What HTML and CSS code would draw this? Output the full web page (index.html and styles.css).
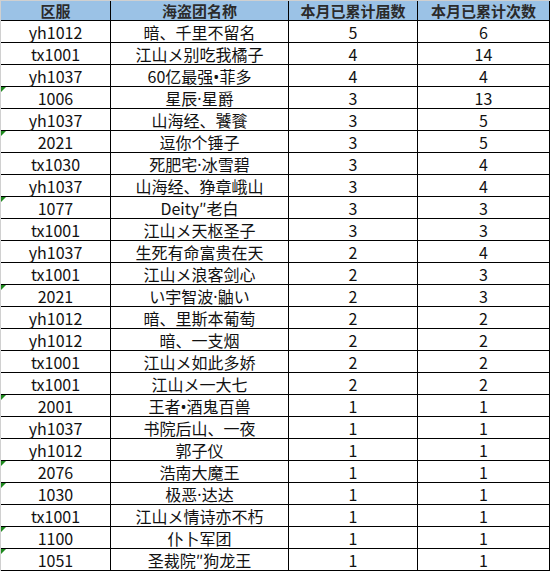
FILE: index.html
```html
<!DOCTYPE html>
<html lang="zh-CN">
<head>
<meta charset="utf-8">
<title>海盗团统计</title>
<link rel="stylesheet" href="styles.css">
</head>
<body>
<div class="sheet">
<table class="grid">
<colgroup><col class="c1"><col class="c2"><col class="c3"><col class="c4"></colgroup>
<thead>
<tr><th>区服</th><th>海盗团名称</th><th>本月已累计届数</th><th>本月已累计次数</th></tr>
</thead>
<tbody>
<tr><td>yh1012</td><td>暗、千里不留名</td><td>5</td><td>6</td></tr>
<tr><td>tx1001</td><td>江山メ别吃我橘子</td><td>4</td><td>14</td></tr>
<tr><td>yh1037</td><td>60亿最强<span class="dot">•</span>菲多</td><td>4</td><td>4</td></tr>
<tr><td class="flag">1006</td><td>星辰<span class="dot">·</span>星爵</td><td>3</td><td>13</td></tr>
<tr><td>yh1037</td><td>山海经、饕餮</td><td>3</td><td>5</td></tr>
<tr><td class="flag">2021</td><td>逗你个锤子</td><td>3</td><td>5</td></tr>
<tr><td>tx1030</td><td>死肥宅<span class="dot">·</span>冰雪碧</td><td>3</td><td>4</td></tr>
<tr><td>yh1037</td><td>山海经、狰章峨山</td><td>3</td><td>4</td></tr>
<tr><td class="flag">1077</td><td>Deity″老白</td><td>3</td><td>3</td></tr>
<tr><td>tx1001</td><td>江山メ天枢圣子</td><td>3</td><td>3</td></tr>
<tr><td>yh1037</td><td>生死有命富贵在天</td><td>2</td><td>4</td></tr>
<tr><td>tx1001</td><td>江山メ浪客剑心</td><td>2</td><td>3</td></tr>
<tr><td class="flag">2021</td><td>い宇智波<span class="dot">·</span>鼬い</td><td>2</td><td>3</td></tr>
<tr><td>yh1012</td><td>暗、里斯本葡萄</td><td>2</td><td>2</td></tr>
<tr><td>yh1012</td><td>暗、一支烟</td><td>2</td><td>2</td></tr>
<tr><td>tx1001</td><td>江山メ如此多娇</td><td>2</td><td>2</td></tr>
<tr><td>tx1001</td><td>江山メ一大七</td><td>2</td><td>2</td></tr>
<tr><td class="flag">2001</td><td>王者<span class="dot">•</span>酒鬼百兽</td><td>1</td><td>1</td></tr>
<tr><td>yh1037</td><td>书院后山、一夜</td><td>1</td><td>1</td></tr>
<tr><td>yh1012</td><td>郭子仪</td><td>1</td><td>1</td></tr>
<tr><td class="flag">2076</td><td>浩南大魔王</td><td>1</td><td>1</td></tr>
<tr><td class="flag">1030</td><td>极恶<span class="dot">·</span>达达</td><td>1</td><td>1</td></tr>
<tr><td>tx1001</td><td>江山メ情诗亦不朽</td><td>1</td><td>1</td></tr>
<tr><td class="flag">1100</td><td>仆卜军团</td><td>1</td><td>1</td></tr>
<tr><td class="flag">1051</td><td>圣裁院″狗龙王</td><td>1</td><td>1</td></tr>
</tbody>
</table>
</div>
</body>
</html>
```

FILE: styles.css
```css
html, body {
  margin: 0;
  padding: 0;
  background: #ffffff;
}

.sheet {
  width: 549px;
  border-top: 1px solid #d0d0d0;
  border-left: 1px solid #d0d0d0;
}

.grid {
  width: 549px;
  table-layout: fixed;
  border-collapse: separate;
  border-spacing: 0;
  font-family: "Noto Sans CJK SC", "Noto Sans", sans-serif;
  color: #111111;
}

.c1 { width: 110px; }
.c2 { width: 178px; }
.c3 { width: 129px; }
.c4 { width: 132px; }

.grid th,
.grid td {
  padding: 0;
  text-align: center;
  vertical-align: middle;
  border-right: 1px solid #000000;
  border-bottom: 1px solid #000000;
  white-space: nowrap;
  box-sizing: border-box;
}

.grid thead tr {
  height: 20px;
}

.grid th {
  background: #9bc2e6;
  font-size: 15px;
  font-weight: bold;
  line-height: 18px;
  color: #2b2b2b;
}

.grid tbody tr {
  height: 22px;
}

.grid td {
  font-size: 16px;
  line-height: 20px;
}

.dot {
  font-family: "Noto Sans", "DejaVu Sans", sans-serif;
  line-height: 1;
}

.grid td.flag {
  position: relative;
}

.grid td.flag::before {
  content: "";
  position: absolute;
  left: 0;
  top: 0;
  border-top: 5px solid #1f8a1f;
  border-right: 5px solid transparent;
}
```
